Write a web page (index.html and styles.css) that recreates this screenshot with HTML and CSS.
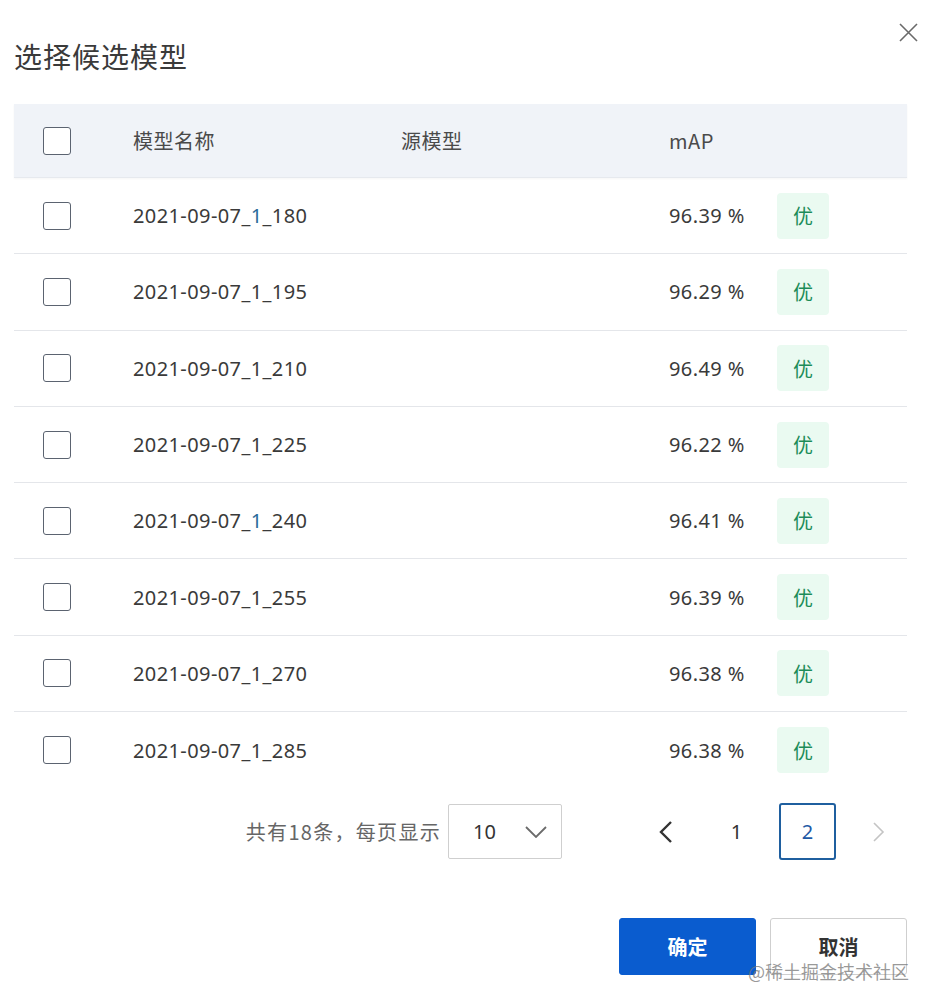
FILE: index.html
```html
<!DOCTYPE html>
<html lang="zh">
<head>
<meta charset="utf-8">
<title>选择候选模型</title>
<link rel="stylesheet" href="styles.css">
</head>
<body>
<div class="dialog">
  <button class="close" aria-label="关闭">
    <svg width="19" height="19" viewBox="0 0 19 19"><path d="M1 1L18 18M18 1L1 18" stroke="#6a6a6a" stroke-width="1.6" fill="none"/></svg>
  </button>
  <h1 class="title">选择候选模型</h1>

  <div class="table">
    <div class="row head">
      <div class="cell"><span class="check"></span></div>
      <div class="cell">模型名称</div>
      <div class="cell">源模型</div>
      <div class="cell">mAP</div>
      <div class="cell"></div>
    </div>
    <div class="row"><div class="cell"><span class="check"></span></div><div class="cell">2021-09-07_<span class="hl">1</span>_180</div><div class="cell"></div><div class="cell">96.39 %</div><div class="cell"><span class="badge">优</span></div></div>
    <div class="row"><div class="cell"><span class="check"></span></div><div class="cell">2021-09-07_1_195</div><div class="cell"></div><div class="cell">96.29 %</div><div class="cell"><span class="badge">优</span></div></div>
    <div class="row"><div class="cell"><span class="check"></span></div><div class="cell">2021-09-07_1_210</div><div class="cell"></div><div class="cell">96.49 %</div><div class="cell"><span class="badge">优</span></div></div>
    <div class="row"><div class="cell"><span class="check"></span></div><div class="cell">2021-09-07_1_225</div><div class="cell"></div><div class="cell">96.22 %</div><div class="cell"><span class="badge">优</span></div></div>
    <div class="row"><div class="cell"><span class="check"></span></div><div class="cell">2021-09-07_<span class="hl">1</span>_240</div><div class="cell"></div><div class="cell">96.41 %</div><div class="cell"><span class="badge">优</span></div></div>
    <div class="row"><div class="cell"><span class="check"></span></div><div class="cell">2021-09-07_1_255</div><div class="cell"></div><div class="cell">96.39 %</div><div class="cell"><span class="badge">优</span></div></div>
    <div class="row"><div class="cell"><span class="check"></span></div><div class="cell">2021-09-07_1_270</div><div class="cell"></div><div class="cell">96.38 %</div><div class="cell"><span class="badge">优</span></div></div>
    <div class="row last"><div class="cell"><span class="check"></span></div><div class="cell">2021-09-07_1_285</div><div class="cell"></div><div class="cell">96.38 %</div><div class="cell"><span class="badge">优</span></div></div>
  </div>

  <div class="pager">
    <span class="total">共有18条，每页显示</span>
    <div class="select">
      <span>10</span>
      <svg width="22" height="12" viewBox="0 0 22 12"><path d="M1 1L11 11L21 1" stroke="#6b6b6b" stroke-width="1.8" fill="none"/></svg>
    </div>
    <div class="pages">
      <span class="page nav"><svg width="14" height="22" viewBox="0 0 14 22"><path d="M12 1L2 11L12 21" stroke="#333" stroke-width="2.4" fill="none"/></svg></span>
      <span class="page">1</span>
      <span class="page active">2</span>
      <span class="page nav"><svg width="12" height="20" viewBox="0 0 12 20"><path d="M1 1L10 10L1 19" stroke="#c4c4c4" stroke-width="1.6" fill="none"/></svg></span>
    </div>
  </div>

  <div class="actions">
    <button class="btn primary">确定</button>
    <button class="btn">取消</button>
  </div>
  <div class="watermark">@稀土掘金技术社区</div>
</div>
</body>
</html>
```
FILE: styles.css
```css
* { box-sizing: border-box; }
html, body {
  margin: 0;
  background: #fff;
}
body {
  font-family: "Noto Sans", "Noto Sans CJK SC", sans-serif;
  color: #333;
}
.dialog {
  position: relative;
  width: 936px;
  height: 1008px;
  padding: 36px 29px 0 14px;
}
.close {
  position: absolute;
  top: 23px;
  right: 18px;
  width: 19px;
  height: 19px;
  padding: 0;
  border: 0;
  background: none;
  display: block;
}
.close svg { display: block; }
.title {
  margin: 0;
  font-family: "Noto Sans CJK SC", sans-serif;
  font-weight: 400;
  font-size: 28px;
  line-height: 40px;
  color: #3a3a3a;
  letter-spacing: 1px;
}
.table {
  margin-top: 28px;
}
.row {
  display: grid;
  grid-template-columns: 119px 268px 268px 108px 1fr;
  align-items: center;
  height: 76.3px;
  border-bottom: 1px solid #e4e6ea;
  font-size: 20px;
  letter-spacing: 0.4px;
  color: #3a3a3a;
}
.row.head {
  height: 74px;
  background: #f0f3f8;
  border-bottom: 1px solid #e6e9ee;
  color: #4a4a4a;
  letter-spacing: 0.5px;
  font-family: "Noto Sans CJK SC", sans-serif;
  box-shadow: 0 1px 2px rgba(0,0,0,0.04);
}
.row.last { border-bottom: 0; }
.cell { white-space: nowrap; }
.cell:first-child { padding-left: 29px; display: flex; }
.check {
  display: block;
  width: 28px;
  height: 28px;
  border: 1.6px solid #5b6370;
  border-radius: 3px;
  background: #fff;
}
.hl { color: #2a6a9a; }
.badge {
  display: inline-flex;
  align-items: center;
  justify-content: center;
  width: 52px;
  height: 46px;
  border-radius: 4px;
  background: #eafaf1;
  color: #1c8c58;
  font-family: "Noto Sans CJK SC", sans-serif;
  font-size: 20px;
  letter-spacing: 0;
}
.pager {
  display: flex;
  justify-content: flex-end;
  align-items: center;
  margin-top: 15px;
  height: 57px;
}
.total {
  font-family: "Noto Sans CJK SC", sans-serif;
  font-size: 20px;
  letter-spacing: 1.3px;
  color: #666;
  margin-right: 7px;
}
.select {
  display: flex;
  align-items: center;
  justify-content: space-between;
  width: 114px;
  height: 55px;
  padding: 0 14px 0 24px;
  border: 1px solid #cfcfcf;
  border-radius: 2px;
  font-size: 20px;
  color: #333;
}
.select svg { display: block; }
.pages {
  display: flex;
  gap: 14px;
  margin-left: 75px;
}
.page {
  display: flex;
  align-items: center;
  justify-content: center;
  width: 57px;
  height: 57px;
  font-size: 20px;
  color: #333;
}
.page.active {
  border: 2px solid #1f5f9f;
  border-radius: 3px;
  color: #1f5aa6;
}
.page svg { display: block; }
.actions {
  display: flex;
  justify-content: flex-end;
  gap: 14px;
  margin-top: 58px;
}
.btn {
  width: 137px;
  height: 57px;
  border: 1px solid #cfcfcf;
  border-radius: 3px;
  background: #fff;
  font-family: "Noto Sans CJK SC", sans-serif;
  font-size: 20px;
  font-weight: 700;
  color: #333;
  padding: 0;
}
.btn.primary {
  background: #0a5ccf;
  border-color: #0a5ccf;
  color: #fff;
}
.watermark {
  position: absolute;
  right: 27px;
  top: 958px;
  font-family: "Noto Sans CJK SC", sans-serif;
  font-size: 18px;
  line-height: 26px;
  color: rgba(120,120,120,0.75);
}
```
